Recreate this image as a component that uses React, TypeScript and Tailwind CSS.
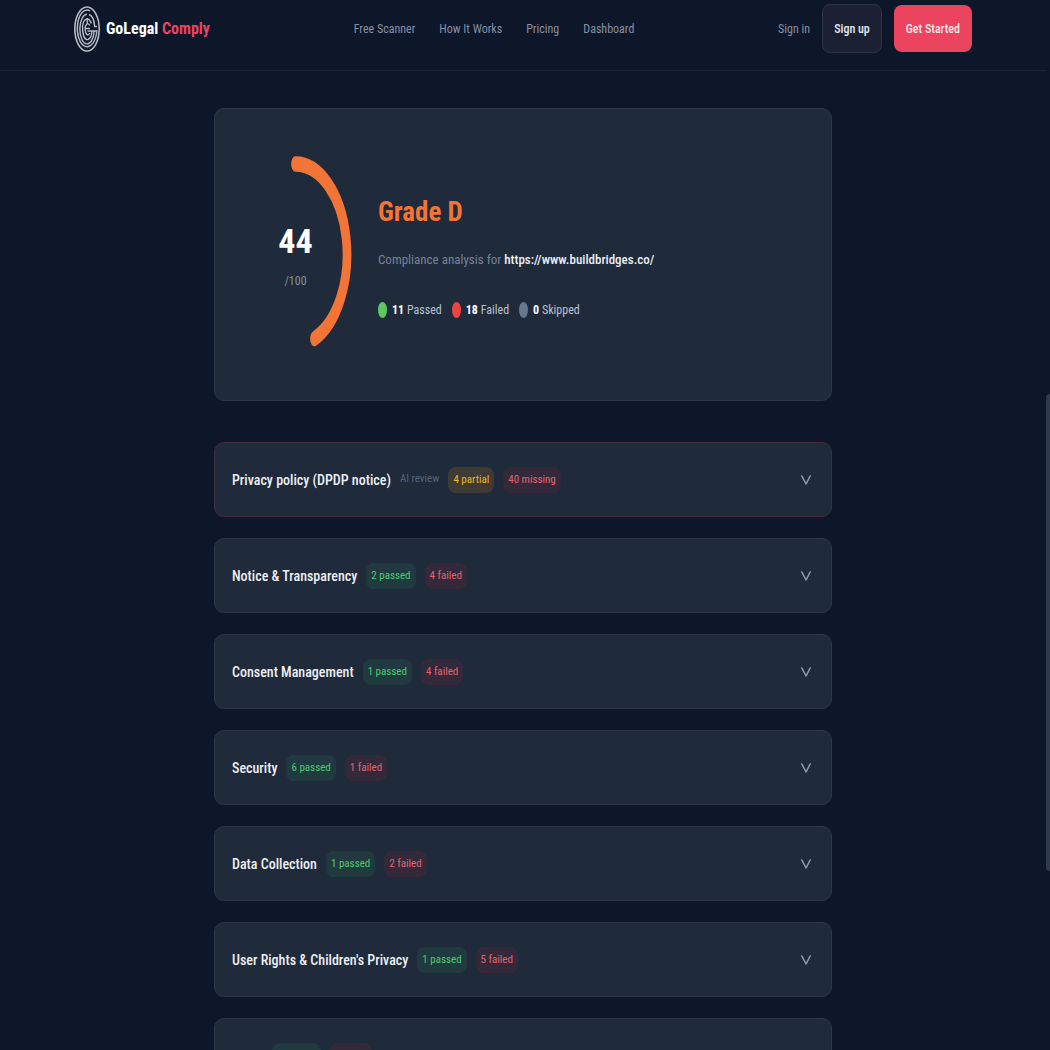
import { useState } from 'react';
import clsx from 'clsx';

type Tone = 'green' | 'red' | 'amber';

interface Badge {
  label: string;
  tone: Tone;
}

interface Section {
  title: string;
  note?: string;
  highlight?: boolean;
  badges: Badge[];
}

const NAV_LINKS = ['Free Scanner', 'How It Works', 'Pricing', 'Dashboard'];

const SECTIONS: Section[] = [
  {
    title: 'Privacy policy (DPDP notice)',
    note: 'AI review',
    highlight: true,
    badges: [
      { label: '4 partial', tone: 'amber' },
      { label: '40 missing', tone: 'red' },
    ],
  },
  {
    title: 'Notice & Transparency',
    badges: [
      { label: '2 passed', tone: 'green' },
      { label: '4 failed', tone: 'red' },
    ],
  },
  {
    title: 'Consent Management',
    badges: [
      { label: '1 passed', tone: 'green' },
      { label: '4 failed', tone: 'red' },
    ],
  },
  {
    title: 'Security',
    badges: [
      { label: '6 passed', tone: 'green' },
      { label: '1 failed', tone: 'red' },
    ],
  },
  {
    title: 'Data Collection',
    badges: [
      { label: '1 passed', tone: 'green' },
      { label: '2 failed', tone: 'red' },
    ],
  },
  {
    title: "User Rights & Children's Privacy",
    badges: [
      { label: '1 passed', tone: 'green' },
      { label: '5 failed', tone: 'red' },
    ],
  },
  {
    title: 'Other',
    badges: [
      { label: '0 passed', tone: 'green' },
      { label: '2 failed', tone: 'red' },
    ],
  },
];

const TONES: Record<Tone, string> = {
  green: 'bg-[#203a40] text-[#4ccb72]',
  red: 'bg-[#34293b] text-[#e3646e]',
  amber: 'bg-[#403a35] text-[#efb920]',
};

function Logo() {
  return (
    <svg viewBox="0 0 26 46" className="h-[46px] w-[26px]" fill="none" stroke="#b4bac6" aria-hidden="true">
      <ellipse cx="13" cy="23" rx="12.2" ry="22" strokeWidth="1.6" />
      <path d="M16 4.8A9.8 18.4 0 1 0 22.8 25H13.5" strokeWidth="1.4" />
      <path d="M13 8.3A7.2 14.8 0 1 0 20.2 25" strokeWidth="1.4" />
      <path d="M15 8.5C18 9.5 20.2 14 20.6 20.5H23" strokeWidth="1.4" />
      <path d="M17.3 17.5C15 10.5 9.5 12 8.6 20C8 28 10.5 34.5 14 33.5C16.5 32.5 17.8 29 17.8 25" strokeWidth="1.4" />
      <path d="M15.8 19.5C13.8 16 11.2 18 11.2 23C11.2 28.5 14 30.5 15.8 27" strokeWidth="1.3" />
      <path d="M13.3 12V18M11 22.5H16" strokeWidth="1.3" />
    </svg>
  );
}

function Header() {
  return (
    <header className="h-[71px] border-b border-[#192236]">
      <div className="mx-auto flex h-[57px] max-w-[898px] items-center justify-between">
        <a href="#" className="flex items-center gap-1.5 text-base font-bold text-white">
          <Logo />
          <span>
            GoLegal <span className="text-[#eb4360]">Comply</span>
          </span>
        </a>
        <nav className="flex gap-6 text-xs text-[#8590a3]">
          {NAV_LINKS.map((link) => (
            <a key={link} href="#" className="hover:text-white">
              {link}
            </a>
          ))}
        </nav>
        <div className="flex items-center gap-3 text-xs">
          <a href="#" className="text-[#8590a3] hover:text-white">
            Sign in
          </a>
          <button
            type="button"
            className="h-[49px] rounded-lg border border-[#2b3345] bg-[#1b2133] px-[11px] font-medium text-[#e8eaef]"
          >
            Sign up
          </button>
          <button type="button" className="h-[47px] rounded-lg bg-[#ea445f] px-3 font-medium text-[#fbe8ec]">
            Get Started
          </button>
        </div>
      </div>
    </header>
  );
}

function ScoreRing() {
  return (
    <div className="grid place-items-center">
      <svg
        viewBox="0 0 220 220"
        preserveAspectRatio="none"
        className="col-start-1 row-start-1 h-[199px] w-[113px]"
        fill="none"
        aria-hidden="true"
      >
        <path d="M110 10A100 100 0 0 1 147 203" stroke="#f27436" strokeWidth="17" strokeLinecap="round" />
      </svg>
      <div className="col-start-1 row-start-1 flex flex-col items-center gap-1">
        <span className="text-[34px] leading-[48px] font-bold text-white">44</span>
        <span className="text-xs leading-6 text-[#8590a3]">/100</span>
      </div>
    </div>
  );
}

function Stat({ count, label, dot }: { count: number; label: string; dot: string }) {
  return (
    <li className="flex items-center gap-[5px]">
      <span className={clsx('h-4 w-[9px] rounded-[50%]', dot)} />
      <span>
        <strong className="font-bold text-white">{count}</strong> {label}
      </span>
    </li>
  );
}

function ScoreCard() {
  return (
    <section className="flex h-[293px] items-center gap-[26px] rounded-[10px] border border-[#2c374a] bg-[#1f2a3b] px-6">
      <ScoreRing />
      <div className="pt-1.5">
        <h1 className="text-[27px] leading-[44px] font-bold text-[#f27436]">Grade D</h1>
        <p className="mt-2 text-[13px] leading-9 text-[#76839a]">
          Compliance analysis for <span className="font-medium text-[#eceff4]">https://www.buildbridges.co/</span>
        </p>
        <ul className="mt-4 flex gap-[10px] text-xs leading-8 text-[#b9c2cf]">
          <Stat count={11} label="Passed" dot="bg-[#5bc860]" />
          <Stat count={18} label="Failed" dot="bg-[#ee4444]" />
          <Stat count={0} label="Skipped" dot="bg-[#67758d]" />
        </ul>
      </div>
    </section>
  );
}

function SectionRow({ section }: { section: Section }) {
  const [open, setOpen] = useState(false);

  return (
    <button
      type="button"
      aria-expanded={open}
      onClick={() => setOpen((v) => !v)}
      className={clsx(
        'flex h-[75px] w-full items-center gap-[9px] rounded-[10px] border bg-[#1f2a3b] pr-5 pl-[17px] text-left',
        section.highlight ? 'border-[#432b42]' : 'border-[#2c374a]',
      )}
    >
      <span className="text-sm font-medium text-[#eef0f4]">{section.title}</span>
      {section.note && <span className="text-[11px] text-[#566377]">{section.note}</span>}
      {section.badges.map((badge) => (
        <span key={badge.label} className={clsx('rounded-lg px-[5px] text-[11px] leading-[26px]', TONES[badge.tone])}>
          {badge.label}
        </span>
      ))}
      <svg
        viewBox="0 0 10 10"
        className={clsx('ml-auto size-[10px]', open && 'rotate-180')}
        fill="none"
        stroke="#949fb1"
        strokeWidth="1.5"
        aria-hidden="true"
      >
        <path d="M.8 1 5 9 9.2 1" strokeLinecap="round" strokeLinejoin="round" />
      </svg>
    </button>
  );
}

export default function App() {
  return (
    <div className="h-screen overflow-hidden bg-[#0e1729] pr-1 font-['Roboto_Condensed',Roboto,sans-serif]">
      <Header />
      <main className="mx-auto mt-[37px] max-w-[618px]">
        <ScoreCard />
        <div className="mt-[41px] flex flex-col gap-[21px]">
          {SECTIONS.map((section) => (
            <SectionRow key={section.title} section={section} />
          ))}
        </div>
      </main>
      {/* scroll position indicator */}
      <div className="fixed top-[394px] right-0 h-[477px] w-1 rounded-l-sm bg-[#2f3b4d]" />
    </div>
  );
}
